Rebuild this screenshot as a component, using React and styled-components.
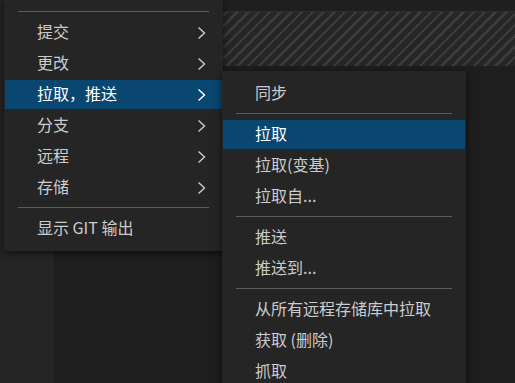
import React from "react";
import styled, { createGlobalStyle } from "styled-components";

const GlobalStyle = createGlobalStyle`
	html, body {
		margin: 0;
		padding: 0;
		background: #1e1e1e;
		overflow: hidden;
	}
	* {
		box-sizing: border-box;
	}
`;

const Workbench = styled.div`
	position: relative;
	display: flex;
	width: 515px;
	height: 383px;
	overflow: hidden;
	font-family: "Noto Sans CJK SC", "Noto Sans", sans-serif;
`;
const Sidebar = styled.div`
	width: 54px;
	background: #252526;
`;
const Main = styled.div`
	flex: 1;
	display: flex;
	flex-direction: column;
	background: #1e1e1e;
`;
const TopStrip = styled.div`
	height: 12px;
	background: #1f1f1f;
	border-bottom: 1px solid #2e2e2e;
`;
const Hatched = styled.div`
	height: 54px;
	background: repeating-linear-gradient(
		-45deg,
		#262626 0px,
		#262626 5px,
		#3b3b3b 5px,
		#3b3b3b 7.6px
	);
`;
const Editor = styled.div`
	flex: 1;
	background: #1e1e1e;
`;

const Menu = styled.div`
	position: absolute;
	left: ${(p) => p.$left}px;
	top: ${(p) => p.$top}px;
	width: ${(p) => p.$width}px;
	padding: 7px 0;
	background: #252526;
	box-shadow: 0 2px 8px rgba(0, 0, 0, 0.65);
	z-index: ${(p) => p.$z};
`;
const Item = styled.div`
	display: flex;
	align-items: center;
	height: 31px;
	border: 1px solid transparent;
	padding-left: 32px;
	padding-right: ${(p) => p.$right}px;
	font-size: 16px;
	line-height: 29px;
	color: ${(p) => (p.$active ? "#ffffff" : "#cccccc")};
	background: ${(p) => (p.$active ? "#094771" : "transparent")};
	background-clip: padding-box;
	white-space: nowrap;
`;
const Label = styled.span`
	flex: 1;
	padding-bottom: 2px;
`;
const Separator = styled.div`
	height: 1px;
	margin: 4px 14px 5px;
	background: #5c5c5c;
`;

const Chevron = ({ color }) => (
	<svg width="9" height="14" viewBox="0 0 9 14">
		<polyline
			points="1.5,1.5 7.5,7 1.5,12.5"
			fill="none"
			stroke={color}
			strokeWidth="1.4"
		/>
	</svg>
);

const mainMenu = [
	{ sep: true },
	{ label: "提交", sub: true },
	{ label: "更改", sub: true },
	{ label: "拉取，推送", sub: true, active: true },
	{ label: "分支", sub: true },
	{ label: "远程", sub: true },
	{ label: "存储", sub: true },
	{ sep: true },
	{ label: "显示 GIT 输出" },
];

const pullMenu = [
	{ label: "同步" },
	{ sep: true },
	{ label: "拉取", active: true },
	{ label: "拉取(变基)" },
	{ label: "拉取自..." },
	{ sep: true },
	{ label: "推送" },
	{ label: "推送到..." },
	{ sep: true },
	{ label: "从所有远程存储库中拉取" },
	{ label: "获取 (删除)" },
	{ label: "抓取" },
];

function MenuList({ items, right }) {
	return items.map((item, index) =>
		item.sep ? (
			<Separator key={index} />
		) : (
			<Item key={index} $active={item.active} $right={right}>
				<Label>{item.label}</Label>
				{item.sub ? (
					<Chevron color={item.active ? "#ffffff" : "#cccccc"} />
				) : (
					""
				)}
			</Item>
		)
	);
}

export default function App() {
	return (
		<>
			<GlobalStyle />
			<Workbench>
				<Sidebar />
				<Main>
					<TopStrip />
					<Hatched />
					<Editor />
				</Main>
				<Menu $left={4} $top={0} $width={219} $z={1}>
					<MenuList items={mainMenu} right={16} />
				</Menu>
				<Menu $left={222} $top={71} $width={244} $z={2}>
					<MenuList items={pullMenu} right={16} />
				</Menu>
			</Workbench>
		</>
	);
}
